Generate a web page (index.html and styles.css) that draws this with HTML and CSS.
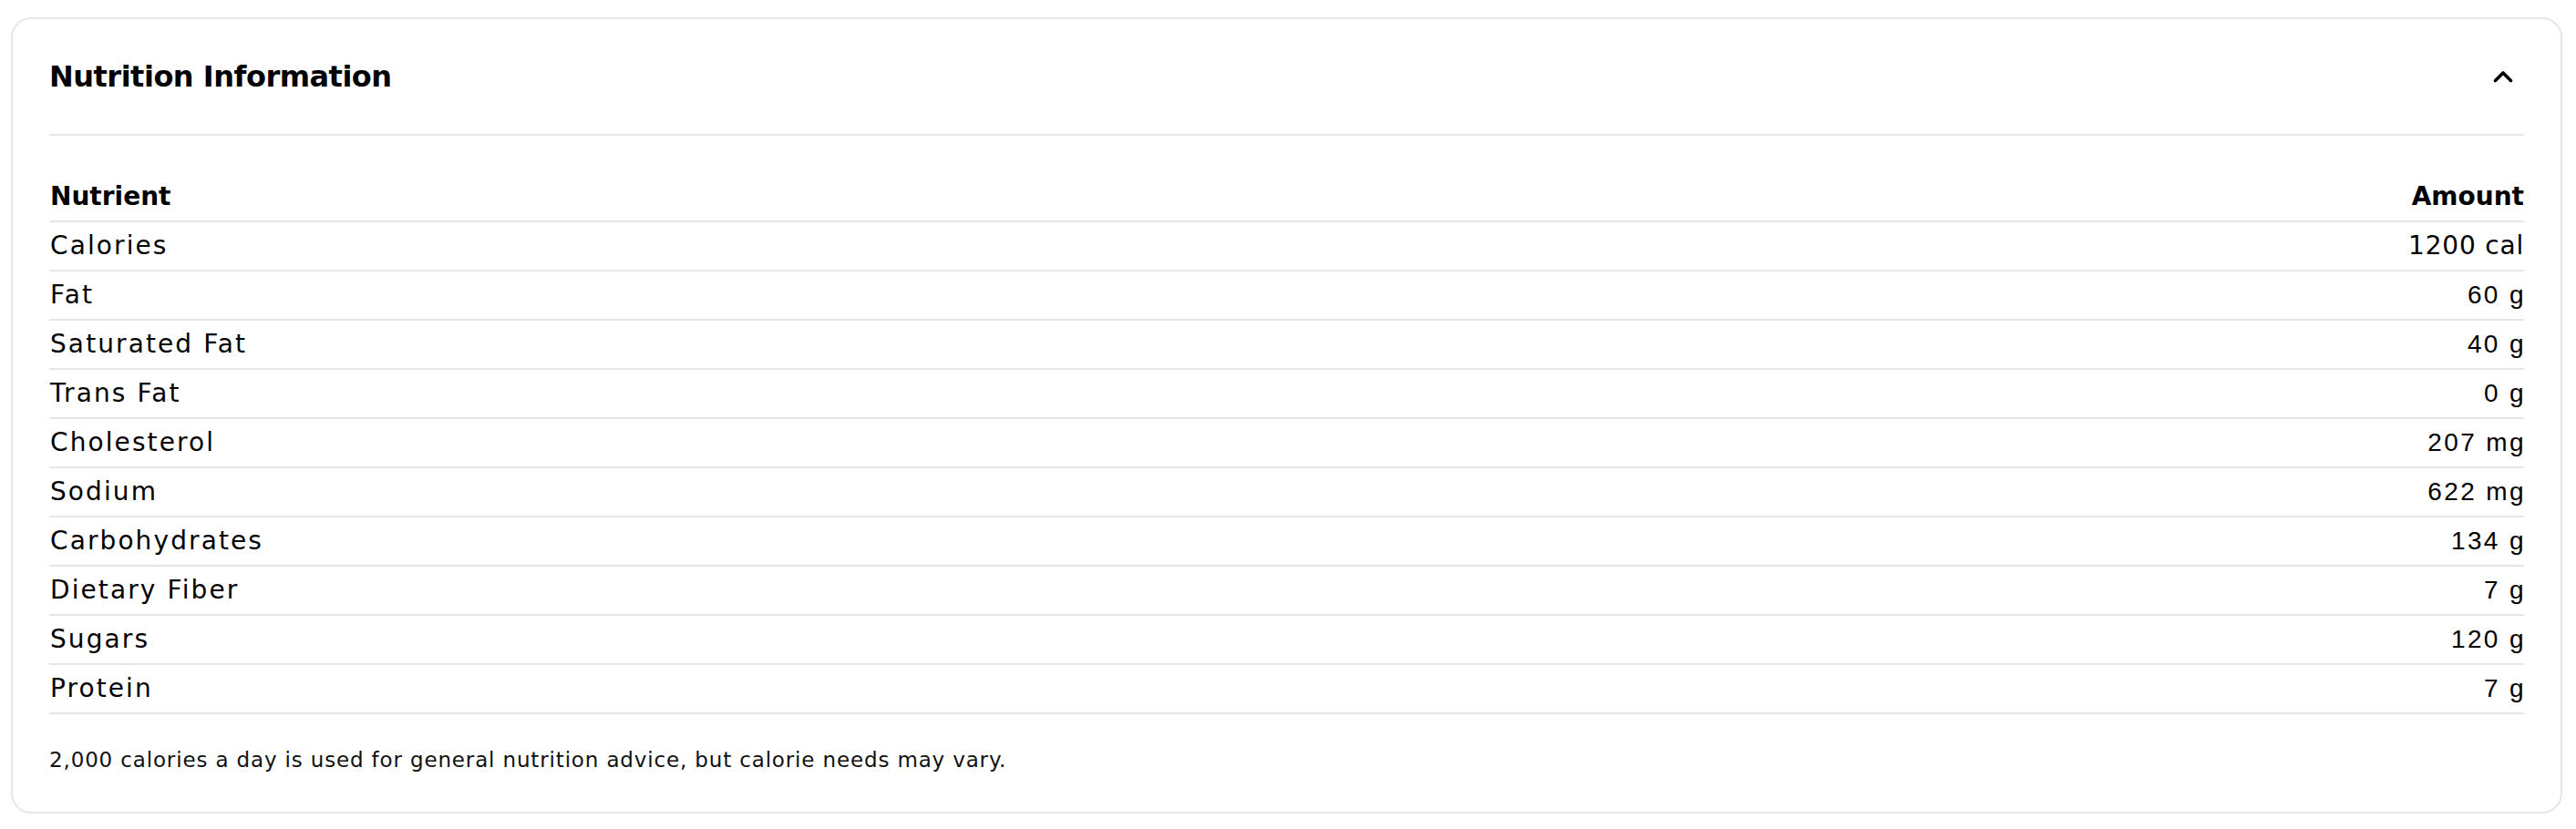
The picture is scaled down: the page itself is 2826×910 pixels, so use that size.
FILE: index.html
```html
<!DOCTYPE html>
<html lang="en">
<head>
<meta charset="utf-8">
<title>Nutrition Information</title>
<link rel="stylesheet" href="styles.css">
</head>
<body>
<section class="card">
  <header class="card-header">
    <h2 class="card-title">Nutrition Information</h2>
    <svg class="chevron" width="46" height="46" viewBox="0 0 46 46" aria-hidden="true">
      <path d="M14.5 27.5 L23 19 L31.5 27.5" fill="none" stroke="#000" stroke-width="3.6" stroke-linecap="round" stroke-linejoin="round"/>
    </svg>
  </header>
  <div class="table">
    <div class="row row-head"><span class="name">Nutrient</span><span class="amount">Amount</span></div>
    <div class="row"><span class="name">Calories</span><span class="amount">1200 cal</span></div>
    <div class="row"><span class="name">Fat</span><span class="amount alt">60 g</span></div>
    <div class="row"><span class="name">Saturated Fat</span><span class="amount alt">40 g</span></div>
    <div class="row"><span class="name">Trans Fat</span><span class="amount alt">0 g</span></div>
    <div class="row"><span class="name">Cholesterol</span><span class="amount alt">207 mg</span></div>
    <div class="row"><span class="name">Sodium</span><span class="amount alt">622 mg</span></div>
    <div class="row"><span class="name">Carbohydrates</span><span class="amount alt">134 g</span></div>
    <div class="row"><span class="name">Dietary Fiber</span><span class="amount alt">7 g</span></div>
    <div class="row"><span class="name">Sugars</span><span class="amount alt">120 g</span></div>
    <div class="row"><span class="name">Protein</span><span class="amount alt">7 g</span></div>
  </div>
  <p class="note">2,000 calories a day is used for general nutrition advice, but calorie needs may vary.</p>
</section>
</body>
</html>
```

FILE: styles.css
```css
html, body {
  margin: 0;
  padding: 0;
  background: #ffffff;
}
body {
  padding: 19px 15px 0 12px;
  font-family: "DejaVu Sans", "Noto Sans", sans-serif;
  color: #000;
}
.card {
  border: 2px solid #e5e5ea;
  border-radius: 22px;
  padding: 0 40px 41px 40px;
  background: #fff;
}
.card-header {
  display: flex;
  align-items: center;
  justify-content: space-between;
  padding: 40px 0 40px 0;
  border-bottom: 2px solid #e5e5ea;
}
.card-title {
  margin: 0;
  font-size: 32px;
  line-height: 46px;
  font-weight: 700;
  letter-spacing: -0.5px;
}
.chevron {
  display: block;
}
.table {
  margin-top: 41px;
}
.row {
  display: flex;
  justify-content: space-between;
  align-items: center;
  padding: 8px 1px;
  border-bottom: 2px solid #e5e5ea;
  font-size: 28px;
  line-height: 36px;
}
.name {
  letter-spacing: 2.1px;
}
.row-head .name,
.row-head .amount {
  font-weight: 700;
  letter-spacing: 0;
}
.amount {
  letter-spacing: 0.8px;
  margin-right: -1px;
}
.amount.alt {
  font-family: "Liberation Sans", Arial, sans-serif;
  letter-spacing: 2.4px;
  margin-right: -3px;
}
.note {
  margin: 34px 0 0 0;
  font-size: 23px;
  line-height: 32px;
  letter-spacing: 0.85px;
  color: #111;
}
```
